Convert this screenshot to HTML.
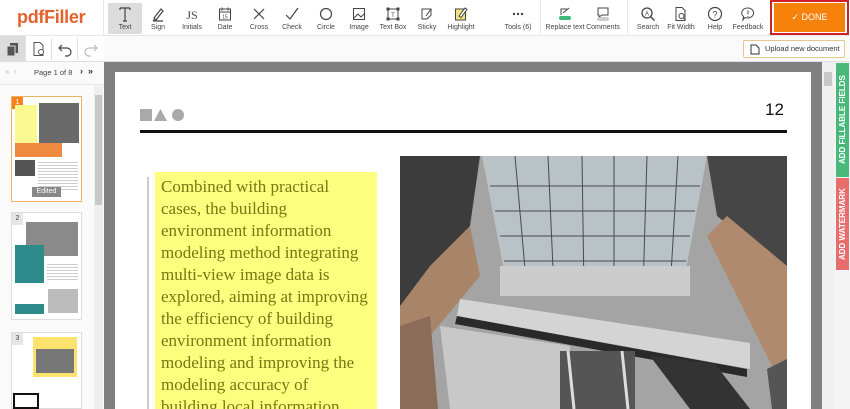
<!DOCTYPE html>
<html><head><meta charset="utf-8"><style>
*{margin:0;padding:0;box-sizing:border-box}
body{width:850px;height:409px;overflow:hidden;background:#fff;font-family:"Liberation Sans",sans-serif;position:relative}
.abs{position:absolute}
.tb{position:absolute;top:0;height:36px;border-bottom:1px solid #e6e6e6;left:0;width:850px;background:#fff}
.tool{position:absolute;top:3px;width:34px;height:31px;text-align:center;font-size:7px;color:#444}
.tool svg{display:block;margin:3px auto 1px;width:16px;height:16px}
.tool span{white-space:nowrap;position:absolute;left:50%;transform:translateX(-50%);top:21px}
.sep{position:absolute;top:0;width:1px;height:36px;background:#e6e6e6}
.txt{font-family:"Liberation Serif",serif;font-size:17px;color:#777714;line-height:22px}
</style></head><body>
<div class="tb"></div>
<div class="abs" style="left:17px;top:7px;font-size:18px;font-weight:bold;color:#e5612e;letter-spacing:-0.3px">pdfFiller</div>
<div class="sep" style="left:103px;height:62px"></div>
<div class="abs" style="left:108px;top:3px;width:34px;height:31px;background:#dcdcdc;border-radius:2px"></div>
<div class="tool" style="left:108px"><svg viewBox="0 0 16 16"><path d="M3 2h10M8 2v13M6 15h4M3 2v2M13 2v2" stroke="#444" fill="none" stroke-width="1.2"/></svg><span>Text</span></div>
<div class="tool" style="left:141px"><svg viewBox="0 0 16 16"><path d="M4 12l7-9 2 2-7 9zM3 15h10M5 13l-2 2" stroke="#444" fill="none" stroke-width="1.2"/></svg><span>Sign</span></div>
<div class="tool" style="left:175px"><svg viewBox="0 0 16 16"><text x="8" y="13" font-size="12" text-anchor="middle" fill="#444" font-family="Liberation Serif">JS</text></svg><span>Initials</span></div>
<div class="tool" style="left:208px"><svg viewBox="0 0 16 16"><rect x="2.5" y="3" width="11" height="11" stroke="#444" fill="none"/><path d="M2.5 6h11M5 1.5v3M11 1.5v3" stroke="#444"/><text x="8" y="12.5" font-size="5" text-anchor="middle" fill="#444">15</text></svg><span>Date</span></div>
<div class="tool" style="left:242px"><svg viewBox="0 0 16 16"><path d="M3 3l10 10M13 3L3 13" stroke="#444" stroke-width="1.2"/></svg><span>Cross</span></div>
<div class="tool" style="left:275px"><svg viewBox="0 0 16 16"><path d="M2 9l4 4 8-11" stroke="#444" fill="none" stroke-width="1.2"/></svg><span>Check</span></div>
<div class="tool" style="left:309px"><svg viewBox="0 0 16 16"><circle cx="8" cy="8" r="5.5" stroke="#444" fill="none" stroke-width="1.2"/></svg><span>Circle</span></div>
<div class="tool" style="left:342px"><svg viewBox="0 0 16 16"><rect x="2.5" y="2.5" width="11" height="11" stroke="#444" fill="none"/><path d="M3 12l4-4 3 3 3-3" stroke="#444" fill="none"/></svg><span>Image</span></div>
<div class="tool" style="left:376px"><svg viewBox="0 0 16 16"><rect x="3" y="3" width="10" height="10" stroke="#444" fill="none"/><rect x="1.5" y="1.5" width="3" height="3" fill="#444"/><rect x="11.5" y="1.5" width="3" height="3" fill="#444"/><rect x="1.5" y="11.5" width="3" height="3" fill="#444"/><rect x="11.5" y="11.5" width="3" height="3" fill="#444"/><text x="8" y="11" font-size="6" text-anchor="middle" fill="#444">T</text></svg><span>Text Box</span></div>
<div class="tool" style="left:410px"><svg viewBox="0 0 16 16"><path d="M3 3h9v6l-4 4H3z" stroke="#444" fill="none"/><path d="M7 10l5-7" stroke="#444"/></svg><span>Sticky</span></div>
<div class="tool" style="left:444px"><svg viewBox="0 0 16 16"><rect x="2.5" y="3" width="10" height="11" stroke="#444" fill="#f1e27a"/><path d="M6 10l6-8 2 1.5-6 8z" stroke="#444" fill="#fff"/></svg><span>Highlight</span></div>
<div class="tool" style="left:501px"><svg viewBox="0 0 16 16"><circle cx="4" cy="8" r="1.2" fill="#444"/><circle cx="8" cy="8" r="1.2" fill="#444"/><circle cx="12" cy="8" r="1.2" fill="#444"/></svg><span>Tools (6)</span></div>
<div class="sep" style="left:540px"></div>
<div class="tool" style="left:548px"><svg viewBox="0 0 16 16"><path d="M4 9V3h6M6 7l6-5" stroke="#444" fill="none"/><rect x="2" y="10" width="12" height="4" rx="2" fill="#3cb878"/></svg><span>Replace text</span></div>
<div class="tool" style="left:586px"><svg viewBox="0 0 16 16"><path d="M3 2h10v7H7l-3 2V9H3z" stroke="#444" fill="none"/><rect x="2" y="11" width="12" height="4" rx="2" fill="#ccc"/></svg><span>Comments</span></div>
<div class="sep" style="left:627px"></div>
<div class="tool" style="left:631px"><svg viewBox="0 0 16 16"><circle cx="7" cy="7" r="5" stroke="#444" fill="none" stroke-width="1.3"/><path d="M10.5 10.5l4 4" stroke="#444" stroke-width="1.5"/><text x="7" y="9.5" font-size="6" text-anchor="middle" fill="#444">A</text></svg><span>Search</span></div>
<div class="tool" style="left:664px"><svg viewBox="0 0 16 16"><path d="M3 1.5h6l3 3v10H3z" stroke="#444" fill="none"/><circle cx="8.5" cy="10" r="2.5" stroke="#444" fill="none"/><path d="M10.5 12l2 2" stroke="#444"/></svg><span>Fit Width</span></div>
<div class="tool" style="left:698px"><svg viewBox="0 0 16 16"><circle cx="8" cy="8" r="6.5" stroke="#444" fill="none" stroke-width="1.2"/><text x="8" y="11.5" font-size="9" text-anchor="middle" fill="#444">?</text></svg><span>Help</span></div>
<div class="tool" style="left:731px"><svg viewBox="0 0 16 16"><path d="M8 2a6 5 0 1 1-3 9.5L3 14l.5-3.5A6 5 0 0 1 8 2z" stroke="#444" fill="none"/><path d="M8 4.5v4M8 10v1" stroke="#444"/></svg><span>Feedback</span></div>
<div class="abs" style="left:770px;top:0;width:79px;height:35px;border:2px solid #d0202a"></div>
<div class="abs" style="left:774px;top:3px;width:71px;height:29px;background:#f6820c;color:#fff;font-size:9px;text-align:center;line-height:29px">✓ DONE</div>
<!-- row2 -->
<div class="abs" style="left:0;top:36px;width:104px;height:26px;border-bottom:1px solid #e0e0e0;background:#fff"></div>
<div class="abs" style="left:0;top:36px;width:26px;height:25px;background:#dcdcdc"></div>
<div class="abs" style="left:25px;top:38px;width:1px;height:22px;background:#e0e0e0"></div>
<div class="abs" style="left:51px;top:38px;width:1px;height:22px;background:#e0e0e0"></div>
<div class="abs" style="left:77px;top:38px;width:1px;height:22px;background:#e0e0e0"></div>
<svg class="abs" style="left:5px;top:41px" width="16" height="16"><rect x="5" y="2" width="8" height="10" fill="#555"/><rect x="2" y="5" width="8" height="10" fill="#555" stroke="#dcdcdc"/></svg>
<svg class="abs" style="left:31px;top:41px" width="16" height="16"><path d="M3 1.5h6l3 3v10H3z" stroke="#555" fill="none"/><circle cx="10" cy="11" r="2.5" fill="#fff" stroke="#555"/></svg>
<svg class="abs" style="left:57px;top:41px" width="16" height="16"><path d="M5 4L2 7l3 3M2 7h8a4 4 0 0 1 0 8H8" stroke="#444" fill="none" stroke-width="1.2"/></svg>
<svg class="abs" style="left:83px;top:41px" width="16" height="16"><path d="M11 4l3 3-3 3M14 7H6a4 4 0 0 0 0 8h2" stroke="#bbb" fill="none" stroke-width="1.2"/></svg>
<div class="abs" style="left:104px;top:36px;width:746px;height:26px;background:#fafafa;border-bottom:1px solid #e0e0e0"></div>
<div class="abs" style="left:743px;top:40px;width:102px;height:18px;border:1px solid #e2c88a;border-radius:2px;background:#fff;font-size:7.5px;color:#333;line-height:16px;padding-left:21px">Upload new document</div>
<svg class="abs" style="left:750px;top:44px" width="10" height="11"><path d="M1 1h5l3 3v6H1z" stroke="#333" fill="none"/></svg>
<!-- sidebar -->
<div class="abs" style="left:0;top:62px;width:104px;height:347px;background:#fafafa"></div>
<div class="abs" style="left:0;top:84px;width:104px;height:1px;background:#e6e6e6"></div>
<div class="abs" style="left:5px;top:67px;font-size:8px;color:#bbb">«&nbsp;&nbsp;‹</div>
<div class="abs" style="left:34px;top:68px;font-size:7.5px;color:#444">Page 1 of 8</div>
<div class="abs" style="left:80px;top:66px;font-size:9px;color:#333;font-weight:bold">›&nbsp;&nbsp;»</div>
<div class="abs" style="left:94px;top:86px;width:9px;height:323px;background:#efefef"></div>
<div class="abs" style="left:95px;top:95px;width:7px;height:110px;background:#c8c8c8"></div>
<!-- thumb1 -->
<div class="abs" style="left:11px;top:96px;width:71px;height:106px;background:#fff;border:1px solid #f0b060"></div>
<div class="abs" style="left:12px;top:97px;width:11px;height:12px;background:#f5821f;color:#fff;font-size:7px;text-align:center;line-height:12px">1</div>
<div class="abs" style="left:15px;top:105px;width:22px;height:38px;background:#fafa90"></div>
<div class="abs" style="left:39px;top:103px;width:40px;height:40px;background:#6a6a6a"></div>
<div class="abs" style="left:15px;top:143px;width:47px;height:14px;background:#f08a40"></div>
<div class="abs" style="left:15px;top:160px;width:20px;height:16px;background:#555"></div>
<div class="abs" style="left:38px;top:160px;width:40px;height:30px;background:repeating-linear-gradient(#fff 0 2px,#ccc 2px 3px)"></div>
<div class="abs" style="left:32px;top:187px;width:29px;height:10px;background:#888;color:#fff;font-size:7px;text-align:center;line-height:10px">Edited</div>
<!-- thumb2 -->
<div class="abs" style="left:11px;top:212px;width:71px;height:108px;background:#fff;border:1px solid #ddd"></div>
<div class="abs" style="left:12px;top:213px;width:11px;height:12px;background:#e6e6e6;color:#444;font-size:7px;text-align:center;line-height:12px">2</div>
<div class="abs" style="left:26px;top:222px;width:52px;height:34px;background:#8a8a8a"></div>
<div class="abs" style="left:15px;top:245px;width:29px;height:38px;background:#2e8b8b"></div>
<div class="abs" style="left:47px;top:262px;width:31px;height:20px;background:repeating-linear-gradient(#fff 0 2px,#ccc 2px 3px)"></div>
<div class="abs" style="left:48px;top:289px;width:30px;height:24px;background:#bbb"></div>
<div class="abs" style="left:15px;top:304px;width:29px;height:10px;background:#2e8b8b"></div>
<!-- thumb3 -->
<div class="abs" style="left:11px;top:332px;width:71px;height:77px;background:#fff;border:1px solid #ddd"></div>
<div class="abs" style="left:12px;top:333px;width:11px;height:12px;background:#e6e6e6;color:#444;font-size:7px;text-align:center;line-height:12px">3</div>
<div class="abs" style="left:33px;top:337px;width:44px;height:40px;background:#fbe36e"></div>
<div class="abs" style="left:36px;top:349px;width:38px;height:24px;background:#777"></div>
<div class="abs" style="left:13px;top:393px;width:26px;height:16px;border:2px solid #111;background:#fff"></div>
<!-- canvas -->
<div class="abs" style="left:104px;top:62px;width:718px;height:347px;background:#808080"></div>
<div class="abs" style="left:115px;top:72px;width:696px;height:337px;background:#fff"></div>
<div class="abs" style="left:822px;top:62px;width:12px;height:347px;background:#f0f0f0"></div>
<div class="abs" style="left:824px;top:72px;width:8px;height:14px;background:#c8c8c8"></div>
<div class="abs" style="left:834px;top:62px;width:16px;height:347px;background:#f4f4f4"></div>
<div class="abs" style="left:836px;top:63px;width:13px;height:114px;background:#48b97a"></div>
<div class="abs" style="left:836px;top:178px;width:13px;height:92px;background:#e86d6d"></div>
<div class="abs" style="left:836px;top:63px;width:13px;height:114px;writing-mode:vertical-rl;transform:rotate(180deg);color:#fff;font-size:8px;font-weight:bold;text-align:center;line-height:13px">ADD FILLABLE FIELDS</div>
<div class="abs" style="left:836px;top:178px;width:13px;height:92px;writing-mode:vertical-rl;transform:rotate(180deg);color:#fff;font-size:8px;font-weight:bold;text-align:center;line-height:13px">ADD WATERMARK</div>
<!-- page content -->
<svg class="abs" style="left:140px;top:108px" width="45" height="14"><rect x="0" y="1" width="12" height="12" fill="#aaa"/><path d="M14 13l6.5-12 6.5 12z" fill="#aaa"/><circle cx="38" cy="7" r="6" fill="#aaa"/></svg>
<div class="abs" style="left:765px;top:100px;font-size:17px;color:#111">12</div>
<div class="abs" style="left:140px;top:130px;width:647px;height:3px;background:#111"></div>
<div class="abs" style="left:147px;top:177px;width:2px;height:232px;background:#ccc"></div>
<div class="abs txt" style="left:155px;top:172px;width:222px;height:237px;background:#fdfd7e;padding:4px 0 0 6px;overflow:hidden;white-space:nowrap">Combined with practical<br>cases, the building<br>environment information<br>modeling method integrating<br>multi-view image data is<br>explored, aiming at improving<br>the efficiency of building<br>environment information<br>modeling and improving the<br>modeling accuracy of<br>building local information</div>
<svg class="abs" style="left:400px;top:156px" width="387" height="253" viewBox="0 0 387 253">
<rect width="387" height="253" fill="#a4a4a4"/>
<path d="M0 0h80L70 70 20 130 0 150z" fill="#3c3c3c"/>
<path d="M387 0h-80l10 60 50 40 20 10z" fill="#464646"/>
<path d="M0 150l30-40 40-40 10 50-50 60-10 83H0z" fill="#a88468"/>
<path d="M387 110l-60-50-20 20 50 100 30 60z" fill="#b08a6e"/>
<path d="M82 0h225l-25 135H108z" fill="#b9c2c6"/>
<g stroke="#4a4a4a" stroke-width="1">
<path d="M115 0l12 135M148 0l6 135M182 0l2 135M214 0v135M247 0l-4 135M278 0l-8 135M90 30h210M95 55h200M100 80h190M104 105h182"/>
</g>
<path d="M100 110h190v30H100z" fill="#ccc"/>
<path d="M60 143l290 44v26L57 160z" fill="#d4d4d4"/>
<path d="M57 160l290 53v8L55 168z" fill="#2a2a2a"/>
<path d="M40 170l130 20v63H50z" fill="#c8c8c8"/>
<path d="M160 195h75v58h-75z" fill="#555"/>
<path d="M168 195l6 58M222 195l6 58" stroke="#ddd" stroke-width="3"/>
<path d="M250 200l40 53h60l-35-45z" fill="#333"/>
<path d="M0 253V170l30-10 8 93z" fill="#8a6c58"/>
<path d="M387 253v-50l-20 10 5 40z" fill="#555"/>
</svg>
</body></html>
